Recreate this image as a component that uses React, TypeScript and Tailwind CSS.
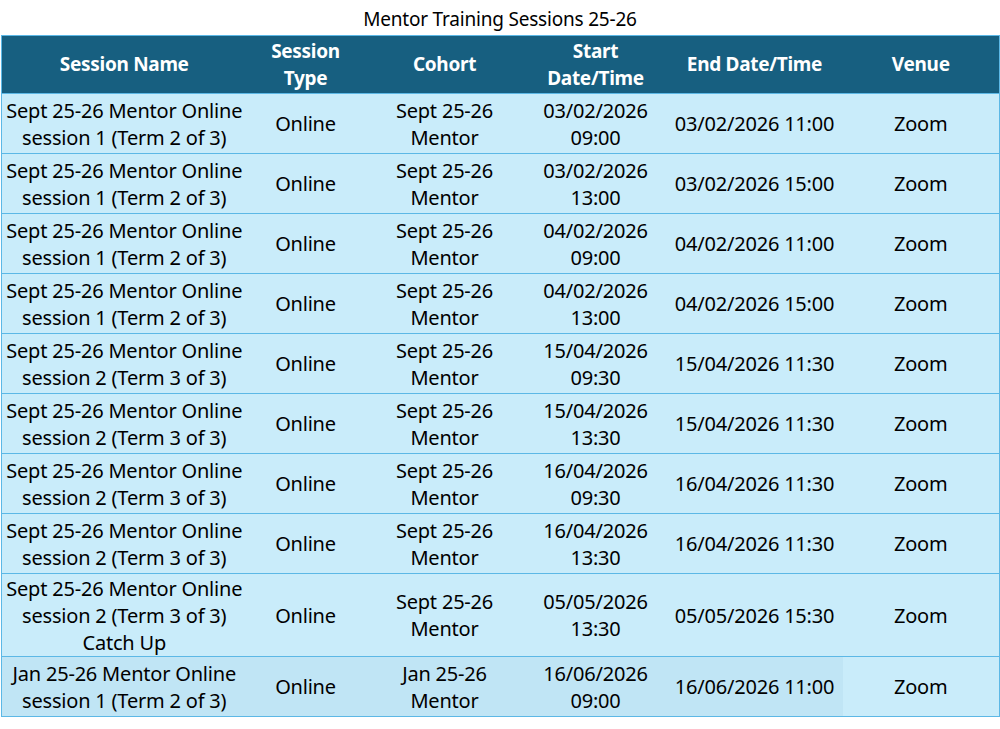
const rows = [
  { name: ['Sept 25-26 Mentor Online', 'session 1 (Term 2 of 3)'], cohort: 'Sept 25-26', start: ['03/02/2026', '09:00'], end: '03/02/2026 11:00' },
  { name: ['Sept 25-26 Mentor Online', 'session 1 (Term 2 of 3)'], cohort: 'Sept 25-26', start: ['03/02/2026', '13:00'], end: '03/02/2026 15:00' },
  { name: ['Sept 25-26 Mentor Online', 'session 1 (Term 2 of 3)'], cohort: 'Sept 25-26', start: ['04/02/2026', '09:00'], end: '04/02/2026 11:00' },
  { name: ['Sept 25-26 Mentor Online', 'session 1 (Term 2 of 3)'], cohort: 'Sept 25-26', start: ['04/02/2026', '13:00'], end: '04/02/2026 15:00' },
  { name: ['Sept 25-26 Mentor Online', 'session 2 (Term 3 of 3)'], cohort: 'Sept 25-26', start: ['15/04/2026', '09:30'], end: '15/04/2026 11:30' },
  { name: ['Sept 25-26 Mentor Online', 'session 2 (Term 3 of 3)'], cohort: 'Sept 25-26', start: ['15/04/2026', '13:30'], end: '15/04/2026 11:30' },
  { name: ['Sept 25-26 Mentor Online', 'session 2 (Term 3 of 3)'], cohort: 'Sept 25-26', start: ['16/04/2026', '09:30'], end: '16/04/2026 11:30' },
  { name: ['Sept 25-26 Mentor Online', 'session 2 (Term 3 of 3)'], cohort: 'Sept 25-26', start: ['16/04/2026', '13:30'], end: '16/04/2026 11:30' },
  { name: ['Sept 25-26 Mentor Online', 'session 2 (Term 3 of 3)', 'Catch Up'], cohort: 'Sept 25-26', start: ['05/05/2026', '13:30'], end: '05/05/2026 15:30' },
]

function Lines({ items }: { items: string[] }) {
  return (
    <>
      {items.map((t, i) => (
        <div key={i}>{t}</div>
      ))}
    </>
  )
}

export default function App() {
  return (
    <div className="w-[1000px] h-[729px] bg-white text-black font-['Noto_Sans',sans-serif]">
      <div className="h-[35px] flex items-center justify-center text-[19px] tracking-[-0.2px] pt-[4px]">
        Mentor Training Sessions 25-26
      </div>
      <table className="ml-[1px] w-[998px] border-collapse table-fixed text-center text-[20px] leading-[27px] tracking-[-0.2px]">
        <colgroup>
          <col className="w-[245px]" />
          <col className="w-[118px]" />
          <col className="w-[160px]" />
          <col className="w-[142px]" />
          <col className="w-[176px]" />
          <col className="w-[157px]" />
        </colgroup>
        <thead>
          <tr className="h-[58px] bg-[#175f80] text-white text-[19px] font-bold tracking-[-0.3px] border border-[#5cb8e6]">
            <th>Session Name</th>
            <th>Session<br />Type</th>
            <th>Cohort</th>
            <th>Start<br />Date/Time</th>
            <th>End Date/Time</th>
            <th>Venue</th>
          </tr>
        </thead>
        <tbody>
          {rows.map((r, i) => (
            <tr
              key={i}
              className={`${r.name.length > 2 ? 'h-[83px]' : 'h-[60px]'} bg-[#c9ecfa] border border-[#5cb8e6]`}
            >
              <td><Lines items={r.name} /></td>
              <td>Online</td>
              <td><Lines items={[r.cohort, 'Mentor']} /></td>
              <td><Lines items={r.start} /></td>
              <td>{r.end}</td>
              <td>Zoom</td>
            </tr>
          ))}
          <tr className="h-[60px] bg-[#c9ecfa] border border-[#5cb8e6]">
            <td className="bg-[#c0e5f5]"><Lines items={['Jan 25-26 Mentor Online', 'session 1 (Term 2 of 3)']} /></td>
            <td className="bg-[#c0e5f5]">Online</td>
            <td className="bg-[#c0e5f5]"><Lines items={['Jan 25-26', 'Mentor']} /></td>
            <td className="bg-[#c0e5f5]"><Lines items={['16/06/2026', '09:00']} /></td>
            <td className="bg-[#c0e5f5]">16/06/2026 11:00</td>
            <td>Zoom</td>
          </tr>
        </tbody>
      </table>
    </div>
  )
}
